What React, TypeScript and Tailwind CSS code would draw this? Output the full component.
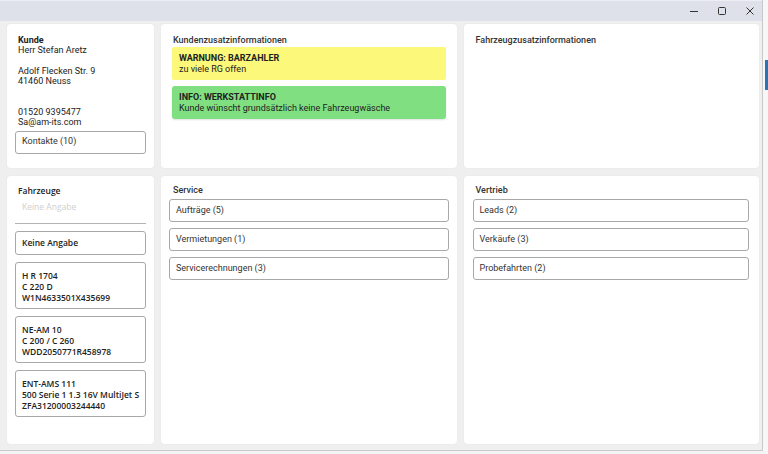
import React from 'react';

const roboto = { fontFamily: 'Roboto, "Liberation Sans", sans-serif' };
const openSans = { fontFamily: '"Open Sans", "Noto Sans", sans-serif' };

const LinkButton = ({ label }: { label: string }) => (
  <div className="h-[23px] flex items-center px-[6px] rounded-[3px] border border-[#a8a8a8] bg-white text-[9px] text-[#333]">
    {label}
  </div>
);

const Panel = ({ children, className = '' }: { children: React.ReactNode; className?: string }) => (
  <div className={`bg-white rounded-[4px] shadow-[0_0_2px_rgba(0,0,0,0.06)] overflow-hidden ${className}`}>
    {children}
  </div>
);

const vehicles = [
  ['H R 1704', 'C 220 D', 'W1N4633501X435699'],
  ['NE-AM 10', 'C 200 / C 260', 'WDD2050771R458978'],
  ['ENT-AMS 111', '500 Serie 1 1.3 16V MultiJet S', 'ZFA31200003244440'],
];

const App = () => {
  return (
    <div className="w-[768px] h-[454px] bg-[#f4f4f4] flex overflow-hidden" style={roboto}>
      <div className="w-[763px] h-[451px] flex flex-col bg-[#efeff0] border-r border-b border-[#c8c8cc]">
        {/* title bar */}
        <div className="h-[21px] shrink-0 bg-[#dfe1ea] border-t border-[#eceef4] flex items-center justify-end">
          <div className="w-[28px] flex justify-center">
            <svg width="10" height="10" viewBox="0 0 10 10"><path d="M1 5.5h8" stroke="#333" strokeWidth="1" /></svg>
          </div>
          <div className="w-[28px] flex justify-center">
            <svg width="10" height="10" viewBox="0 0 10 10"><rect x="1.5" y="1.5" width="7" height="7" rx="1" fill="none" stroke="#333" strokeWidth="1" /></svg>
          </div>
          <div className="w-[28px] flex justify-center mr-[-2px]">
            <svg width="10" height="10" viewBox="0 0 10 10"><path d="M1.5 1.5l7 7M8.5 1.5l-7 7" stroke="#333" strokeWidth="1" /></svg>
          </div>
        </div>

        {/* content */}
        <div className="flex-1 grid grid-cols-[147px_1fr_1fr] grid-rows-[144px_1fr] gap-x-[7px] gap-y-[8px] pt-[3px] pl-[7px] pr-[3px] pb-[6px]">
          {/* Kunde */}
          <Panel className="px-2 pt-[11px]">
            <div className="pl-[3px] text-[9px] leading-[10.3px] text-[#222]">
              <div className="font-bold">Kunde</div>
              <div>Herr Stefan Aretz</div>
              <div className="h-[10.3px]" />
              <div>Adolf Flecken Str. 9</div>
              <div>41460 Neuss</div>
              <div className="h-[20.6px]" />
              <div>01520 9395477</div>
              <div>Sa@am-its.com</div>
            </div>
            <div className="mt-[3px]">
              <LinkButton label="Kontakte (10)" />
            </div>
          </Panel>

          {/* Kundenzusatzinformationen */}
          <Panel className="px-[11px] pt-[11px]">
            <div className="pl-[1px] text-[9px] leading-[10px] text-[#333] font-medium">Kundenzusatzinformationen</div>
            <div className="mt-[2px] flex flex-col gap-[6px] text-[9px] leading-[11px] text-[#222]">
              <div className="h-[33px] rounded-[2px] bg-[#fcf87a] px-[7px] pt-[6px]">
                <div className="font-bold">WARNUNG: BARZAHLER</div>
                <div>zu viele RG offen</div>
              </div>
              <div className="h-[33px] rounded-[3px] bg-[#80df80] px-[7px] pt-[6px] shadow-[0_1px_2px_rgba(0,0,0,0.12)]">
                <div className="font-bold">INFO: WERKSTATTINFO</div>
                <div>Kunde wünscht grundsätzlich keine Fahrzeugwäsche</div>
              </div>
            </div>
          </Panel>

          {/* Fahrzeugzusatzinformationen */}
          <Panel className="px-[12px] pt-[11px]">
            <div className="text-[9px] leading-[10px] text-[#333] font-medium">Fahrzeugzusatzinformationen</div>
          </Panel>

          {/* Fahrzeuge */}
          <Panel className="px-2 pt-[9px]">
            <div style={openSans}>
              <div className="pl-[3px] text-[8.5px] leading-[11px] font-semibold text-[#222]">Fahrzeuge</div>
              <div className="mt-[5px] h-[23px] border-b border-[#b4b4b4] px-[7px] text-[8.5px] leading-[11px] text-[#cfcfcf]">
                Keine Angabe
              </div>
              <div className="mt-[7px] flex flex-col gap-[7px]">
                <div className="h-[24px] flex items-center px-[6px] rounded-[3px] border border-[#a8a8a8] text-[8.5px] font-semibold text-[#222]">
                  Keine Angabe
                </div>
                {vehicles.map((v) => (
                  <div
                    key={v[2]}
                    className="h-[47px] px-[6px] pt-[7px] rounded-[3px] border border-[#a8a8a8] text-[8.5px] leading-[11px] font-semibold text-[#222] whitespace-nowrap"
                  >
                    {v.map((line) => (
                      <div key={line}>{line}</div>
                    ))}
                  </div>
                ))}
              </div>
            </div>
          </Panel>

          {/* Service */}
          <Panel className="px-2 pt-[9px]">
            <div className="pl-[4px] text-[9px] leading-[11px] text-[#333] font-medium">Service</div>
            <div className="mt-[3px] flex flex-col gap-[6px]">
              <LinkButton label="Aufträge (5)" />
              <LinkButton label="Vermietungen (1)" />
              <LinkButton label="Servicerechnungen (3)" />
            </div>
          </Panel>

          {/* Vertrieb */}
          <Panel className="pl-[9px] pr-[10px] pt-[9px]">
            <div className="pl-[3px] text-[9px] leading-[11px] text-[#333] font-medium">Vertrieb</div>
            <div className="mt-[3px] flex flex-col gap-[6px]">
              <LinkButton label="Leads (2)" />
              <LinkButton label="Verkäufe (3)" />
              <LinkButton label="Probefahrten (2)" />
            </div>
          </Panel>
        </div>
      </div>

      {/* sliver of the desktop behind the window */}
      <div className="flex-1 h-[451px] bg-[#f7f7f7] flex flex-col">
        <div className="h-[60px]" />
        <div className="h-[30px] bg-[#2a72b8] ml-[2px]" />
      </div>
    </div>
  );
};

export default App;
